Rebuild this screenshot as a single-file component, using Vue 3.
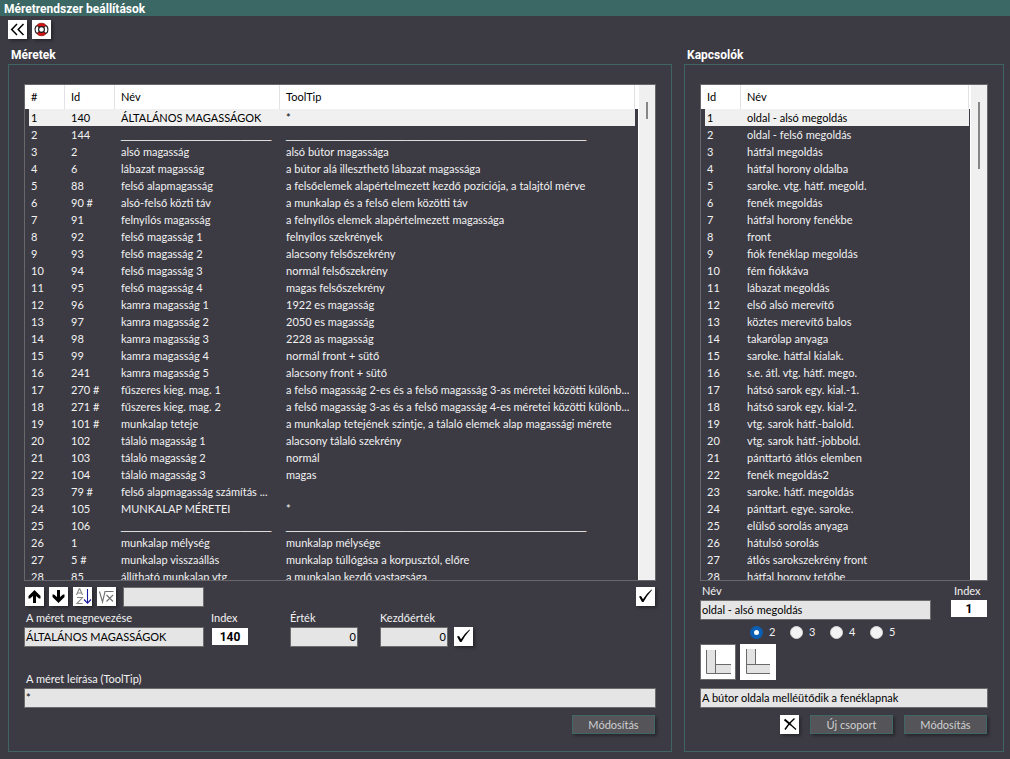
<script setup>
import { ref } from 'vue'

const shortLine = '_'.repeat(30)
const longLine = '_'.repeat(60)

const sizes = [
  ['140', 'ÁLTALÁNOS MAGASSÁGOK', '*'],
  ['144', shortLine, longLine],
  ['2', 'alsó magasság', 'alsó bútor magassága'],
  ['6', 'lábazat magasság', 'a bútor alá illeszthető lábazat magassága'],
  ['88', 'felső alapmagasság', 'a felsőelemek alapértelmezett kezdő pozíciója, a talajtól mérve'],
  ['90 #', 'alsó-felső közti táv', 'a munkalap és a felső elem közötti táv'],
  ['91', 'felnyílós magasság', 'a felnyílós elemek alapértelmezett magassága'],
  ['92', 'felső magasság 1', 'felnyílos szekrények'],
  ['93', 'felső magasság 2', 'alacsony felsőszekrény'],
  ['94', 'felső magasság 3', 'normál felsőszekrény'],
  ['95', 'felső magasság 4', 'magas felsőszekrény'],
  ['96', 'kamra magasság 1', '1922 es magasság'],
  ['97', 'kamra magasság 2', '2050 es magasság'],
  ['98', 'kamra magasság 3', '2228 as magasság'],
  ['99', 'kamra magasság 4', 'normál front + sütő'],
  ['241', 'kamra magasság 5', 'alacsony front + sütő'],
  ['270 #', 'fűszeres kieg. mag. 1', 'a felső magasság 2-es és a felső magasság 3-as méretei közötti különb...'],
  ['271 #', 'fűszeres kieg. mag. 2', 'a felső magasság 3-as és a felső magasság 4-es méretei közötti különb...'],
  ['101 #', 'munkalap teteje', 'a munkalap tetejének szintje, a tálaló elemek alap magassági mérete'],
  ['102', 'tálaló magasság 1', 'alacsony tálaló szekrény'],
  ['103', 'tálaló magasság 2', 'normál'],
  ['104', 'tálaló magasság 3', 'magas'],
  ['79 #', 'felső alapmagasság számítás ...', ''],
  ['105', 'MUNKALAP MÉRETEI', '*'],
  ['106', shortLine, longLine],
  ['1', 'munkalap mélység', 'munkalap mélysége'],
  ['5 #', 'munkalap visszaállás', 'munkalap túllógása a korpusztól, előre'],
  ['85', 'állítható munkalap vtg', 'a munkalap kezdő vastagsága'],
]

const switches = [
  'oldal - alsó megoldás', 'oldal - felső megoldás', 'hátfal megoldás', 'hátfal horony oldalba',
  'saroke. vtg. hátf. megold.', 'fenék megoldás', 'hátfal horony fenékbe', 'front',
  'fiók fenéklap megoldás', 'fém fiókkáva', 'lábazat megoldás', 'első alsó merevítő',
  'köztes merevítő balos', 'takarólap anyaga', 'saroke. hátfal kialak.', 's.e. átl. vtg. hátf. mego.',
  'hátsó sarok egy. kial.-1.', 'hátsó sarok egy. kial-2.', 'vtg. sarok hátf.-balold.',
  'vtg. sarok hátf.-jobbold.', 'pánttartó átlós elemben', 'fenék megoldás2',
  'saroke. hátf. megoldás', 'pánttart. egye. saroke.', 'elülső sorolás anyaga',
  'hátulsó sorolás', 'átlós sarokszekrény front', 'hátfal horony tetőbe',
]

const selectedSize = ref(0)
const selectedSwitch = ref(0)
const filter = ref('')
const sizeName = ref('ÁLTALÁNOS MAGASSÁGOK')
const value = ref('0')
const startValue = ref('0')
const tooltip = ref('*')
const switchName = ref('oldal - alsó megoldás')
const variants = ref('2')
const variantText = ref('A bútor oldala melléütődik a fenéklapnak')
</script>

<template>
  <div class="window">
    <header class="titlebar">Méretrendszer beállítások</header>

    <nav class="tools">
      <button class="icon" aria-label="Vissza">
        <svg viewBox="0 0 19 19"><path d="M9 4 3.7 9.5 9 15M15.5 4l-5.3 5.5 5.3 5.5" fill="none" stroke="#000" stroke-width="1.5" /></svg>
      </button>
      <button class="icon" aria-label="Súgó">
        <svg viewBox="0 0 19 19" fill="none">
          <path d="M4.700 5.500A6.200 6.200 0 0 1 14.300 5.500L11.800 7.600a3 3 0 0 0-4.600 0ZM4.700 13.500A6.200 6.200 0 0 0 14.300 13.500L11.800 11.400a3 3 0 0 1-4.600 0Z" fill="#d61212" />
          <path d="M4.700 5.500A6.200 6.200 0 0 0 4.700 13.500M14.300 5.500A6.200 6.200 0 0 1 14.300 13.500" stroke="#222" stroke-width="1.200" />
          <path d="M4.700 5.500A6.200 6.200 0 0 1 14.300 5.500M4.700 13.500A6.200 6.200 0 0 0 14.300 13.500" stroke="#8c0c0c" stroke-width="0.800" />
          <circle cx="9.500" cy="9.500" r="2.900" fill="#fff" stroke="#111" stroke-width="1.100" />
          <path d="M5 5.500l2.200 1.900M14 5.500l-2.200 1.900M5 13.500l2.200-1.900M14 13.500l-2.200-1.900" stroke="#111" stroke-width="0.900" />
        </svg>
      </button>
    </nav>

    <main class="panels">
      <section class="group">
        <h2>Méretek</h2>
        <div class="frame">
          <div class="list">
            <div class="view">
              <table>
                <colgroup><col class="c40"><col class="c50"><col class="c165"><col><col class="c3"></colgroup>
                <thead>
                  <tr><th>#</th><th>Id</th><th>Név</th><th>ToolTip</th><th class="end"></th></tr>
                </thead>
                <tbody>
                  <tr v-for="(row, i) in sizes" :key="i" :class="{ selected: i === selectedSize }" @click="selectedSize = i">
                    <td>{{ i + 1 }}</td>
                    <td>{{ row[0] }}</td>
                    <td><div :class="{ rule: row[1] === shortLine }">{{ row[1] }}</div></td>
                    <td><div :class="{ rule: row[2] === longLine }">{{ row[2] }}</div></td>
                    <td class="end"></td>
                  </tr>
                </tbody>
              </table>
            </div>
            <div class="scroll"><div class="thumb"></div></div>
          </div>

          <div class="bar">
            <button class="icon" aria-label="Fel">
              <svg viewBox="0 0 19 19"><path d="M9.500 3 15.500 9v2.500h-1.500L11 9v7H8V9l-3 2.500H3.500V9Z" fill="#000" /></svg>
            </button>
            <button class="icon" aria-label="Le">
              <svg viewBox="0 0 19 19"><path d="M9.500 16 15.500 10V7.500h-1.500L11 10V3H8v7L5 7.500H3.500V10Z" fill="#000" /></svg>
            </button>
            <button class="icon" aria-label="Rendezés">
              <svg viewBox="0 0 19 19" fill="none">
                <path d="M3.500 8 6.200 1.800h.6L9.500 8M4.300 6h4.400M4 10.500h5.500L4 16.500h5.700" stroke="#858585" stroke-width="1.100" />
                <path d="M14.500 2v14M11 12.500l3.500 3.700 3.500-3.700" stroke="#1a1a9c" stroke-width="1.100" />
              </svg>
            </button>
            <button class="icon" aria-label="Képlet">
              <svg viewBox="0 0 19 19" fill="none" stroke="#707070" stroke-width="1.100"><path d="M2.500 4.500 5.500 15 8 4.500h8.500M9.500 8l6.500 6.500M16 8l-6.500 6.500" /></svg>
            </button>
            <input v-model="filter" class="text filter" aria-label="Szűrő">
            <button class="icon last" aria-label="Elfogad">
              <svg viewBox="0 0 19 19"><path d="M3 9.500 5 9l2 3.200Q10.500 6.500 15.500 2.500L16 3Q11 8.500 7.500 15H6Z" fill="#000" /></svg>
            </button>
          </div>

          <div class="fields">
            <div class="field name">
              <label for="size-name">A méret megnevezése</label>
              <input id="size-name" v-model="sizeName" class="text">
            </div>
            <div class="field index">
              <span>Index</span>
              <output>140</output>
            </div>
            <div class="field number value">
              <label for="size-value">Érték</label>
              <input id="size-value" v-model="value" class="text">
            </div>
            <div class="field number">
              <label for="size-start">Kezdőérték</label>
              <input id="size-start" v-model="startValue" class="text">
            </div>
            <button class="icon" aria-label="Érték elfogadása">
              <svg viewBox="0 0 19 19"><path d="M3 9.500 5 9l2 3.200Q10.500 6.500 15.500 2.500L16 3Q11 8.500 7.500 15H6Z" fill="#000" /></svg>
            </button>
          </div>

          <div class="field description">
            <label for="size-tip">A méret leírása (ToolTip)</label>
            <input id="size-tip" v-model="tooltip" class="text">
          </div>

          <div class="actions">
            <button class="command">Módosítás</button>
          </div>
        </div>
      </section>

      <section class="group">
        <h2>Kapcsolók</h2>
        <div class="frame">
          <div class="list">
            <div class="view">
              <table>
                <colgroup><col class="c40"><col><col class="c1"></colgroup>
                <thead>
                  <tr><th>Id</th><th>Név</th><th class="end"></th></tr>
                </thead>
                <tbody>
                  <tr v-for="(name, i) in switches" :key="i" :class="{ selected: i === selectedSwitch }" @click="selectedSwitch = i">
                    <td>{{ i + 1 }}</td>
                    <td>{{ name }}</td>
                    <td class="end"></td>
                  </tr>
                </tbody>
              </table>
            </div>
            <div class="scroll"><div class="thumb tall"></div></div>
          </div>

          <div class="fields switch">
            <div class="field grow">
              <label for="switch-name">Név</label>
              <input id="switch-name" v-model="switchName" class="text">
            </div>
            <div class="field index">
              <span>Index</span>
              <output>1</output>
            </div>
          </div>

          <div class="radios">
            <label v-for="n in ['2', '3', '4', '5']" :key="n">
              <input v-model="variants" type="radio" name="variants" :value="n">{{ n }}
            </label>
          </div>

          <div class="pictures">
            <button class="picture active" aria-label="Oldal melléütődik">
              <svg viewBox="0 0 36 36">
                <path d="M6 6h9v23H6ZM15 21h16v8H15Z" fill="#e3e3e3" />
                <path d="M6.500 6v23.500H31M15.500 6v23M15 20.500h16" fill="none" stroke="#6a6a6a" />
              </svg>
            </button>
            <button class="picture" aria-label="Oldal ráül">
              <svg viewBox="0 0 36 36">
                <path d="M6 5h9v15H6ZM6 21h24v8H6Z" fill="#e3e3e3" />
                <path d="M6.500 5v24.500H30M15.500 5v15M6 20.500h24" fill="none" stroke="#6a6a6a" />
              </svg>
            </button>
          </div>

          <input v-model="variantText" class="text" aria-label="Változat leírása">

          <div class="actions">
            <button class="icon" aria-label="Törlés">
              <svg viewBox="0 0 19 19" fill="none" stroke="#000"><path d="M4.500 4.500 11 10" stroke-width="2" /><path d="M11 10l5 4.500" stroke-width="1.200" /><path d="M14.500 3.500Q9 8 5 14.500" stroke-width="1.500" /></svg>
            </button>
            <button class="command">Új csoport</button>
            <button class="command">Módosítás</button>
          </div>
        </div>
      </section>
    </main>
  </div>
</template>

<style>
body {
  margin: 0;
  background: #3c3b44;
}
</style>

<style scoped>
.window {
  display: flex;
  flex-direction: column;
  box-sizing: border-box;
  height: 100vh;
  min-height: 480px;
  padding-bottom: 7px;
  background: #3c3b44;
  color: #f2f2f2;
  font: 11px/16px Lato, "Liberation Sans", sans-serif;
}
.window * {
  box-sizing: border-box;
}
button,
input {
  font: inherit;
}
.titlebar {
  height: 16px;
  padding-left: 4px;
  background: #3b6765;
  color: #fff;
  font: 700 12px/18px Roboto, "Liberation Sans", sans-serif;
}
.tools {
  display: flex;
  gap: 5px;
  padding: 4px 8px 0;
}
.icon {
  flex: none;
  width: 19px;
  height: 19px;
  padding: 0;
  border: 0;
  background: #fff;
  box-shadow: 2px 2px 3px rgba(0, 0, 0, 0.35);
}
.icon svg,
.picture svg {
  display: block;
  width: 100%;
  height: 100%;
}
.panels {
  flex: 1;
  display: grid;
  grid-template-columns: minmax(0, 1fr) 320px;
  gap: 12px;
  min-height: 0;
  padding: 8px 6px 0 8px;
}
.group {
  display: flex;
  flex-direction: column;
  min-height: 0;
}
h2 {
  margin: 0 0 1px 3px;
  font: 700 12px/16px Roboto, "Liberation Sans", sans-serif;
  color: #fff;
}
.frame {
  flex: 1;
  display: flex;
  flex-direction: column;
  min-height: 0;
  padding: 19px 15px 17px;
  border: 1px solid #3f6464;
}
.list {
  flex: 1 1 0;
  display: flex;
  min-height: 0;
  border: 1px solid #68686c;
}
.view {
  flex: 1;
  min-width: 0;
  overflow: hidden;
}
table {
  width: 100%;
  table-layout: fixed;
  border-spacing: 0;
}
.c40 { width: 40px; }
.c50 { width: 50px; }
.c165 { width: 165px; }
.c3 { width: 3px; }
.c1 { width: 1px; }
th {
  height: 24px;
  padding: 0 6px;
  border-right: 1px solid #e2e2e6;
  background: #fff;
  color: #000;
  font-weight: 400;
  text-align: left;
}
td {
  height: 17px;
  padding: 0 6px;
  line-height: 17px;
  white-space: nowrap;
}
td:first-child {
  padding-left: 2px;
  border-left: 4px solid transparent;
  background-clip: padding-box;
}
th.end,
td.end {
  padding: 0;
  border: 0;
}
.selected td:not(.end) {
  background-color: #f0f0f0;
  color: #000;
}
.rule {
  height: 17px;
  color: #fff;
  font: 700 9px/23px "Liberation Sans", sans-serif;
  text-shadow: 0 0 #fff, 0 0 #fff;
}
.scroll {
  width: 17px;
  padding: 17px 7px 0;
  border-left: 1px solid #fff;
  background: #f0f0f0;
}
.thumb {
  width: 2px;
  height: 17px;
  background: #868686;
}
.tall {
  height: 67px;
}
.bar {
  display: flex;
  gap: 5px;
  padding: 6px 1px 3px;
}
.text {
  width: 100%;
  height: 20px;
  padding: 0 1px 2px;
  border: 1px solid #6c6c6c;
  border-radius: 0;
  outline: 0;
  background: #e5e5e5;
  color: #000;
}
.bar .filter {
  width: 81px;
  margin-left: 2px;
}
.last {
  margin-left: auto;
}
.fields {
  display: flex;
  align-items: flex-end;
}
.field {
  display: flex;
  flex-direction: column;
  gap: 1px;
}
.field label {
  padding-left: 2px;
}
.name {
  width: 180px;
}
.index {
  align-self: flex-start;
  width: 37px;
  margin-left: 7px;
}
output {
  width: 36px;
  height: 17px;
  margin: 1px 0 0 1px;
  background: #fff;
  color: #000;
  font: 700 12px/18px Roboto, "Liberation Sans", sans-serif;
  text-align: center;
}
.number {
  width: 68px;
}
.number label {
  padding-left: 0;
}
.number .text {
  text-align: right;
}
.value {
  margin: 0 22px 0 42px;
}
.fields .icon {
  margin: 0 0 1px 6px;
}
.description {
  margin-top: 24px;
}
.actions {
  display: flex;
  justify-content: flex-end;
  gap: 11px;
  padding: 7px 1px 0;
}
.command {
  width: 83px;
  height: 19px;
  padding: 0;
  border: 1px solid #416666;
  background: #555459;
  color: #d0d0d0;
  box-shadow: 2px 2px 3px rgba(0, 0, 0, 0.35);
}
.switch {
  padding-top: 2px;
}
.grow {
  flex: 1;
}
.switch .index {
  margin: 0 0 0 20px;
}
.switch .index span {
  padding-left: 3px;
}
.switch output {
  margin: 0;
}
.radios {
  display: flex;
  padding: 4px 0 4px 50px;
}
.radios label {
  display: flex;
  align-items: center;
  gap: 6px;
  width: 40px;
}
.radios input {
  appearance: none;
  width: 13px;
  height: 13px;
  margin: 0;
  border: 1px solid #d8d8d8;
  border-radius: 50%;
  background: #f3f3f3;
}
.radios input:checked {
  border: 4px solid #0a5fb4;
  background: #fff;
}
.pictures {
  display: flex;
  gap: 4px;
  padding-bottom: 8px;
}
.picture {
  width: 36px;
  height: 36px;
  padding: 0;
  border: 0;
  background: #fff;
}
.active {
  box-shadow: inset 0 0 0 1px #6c6c6c;
}
</style>
